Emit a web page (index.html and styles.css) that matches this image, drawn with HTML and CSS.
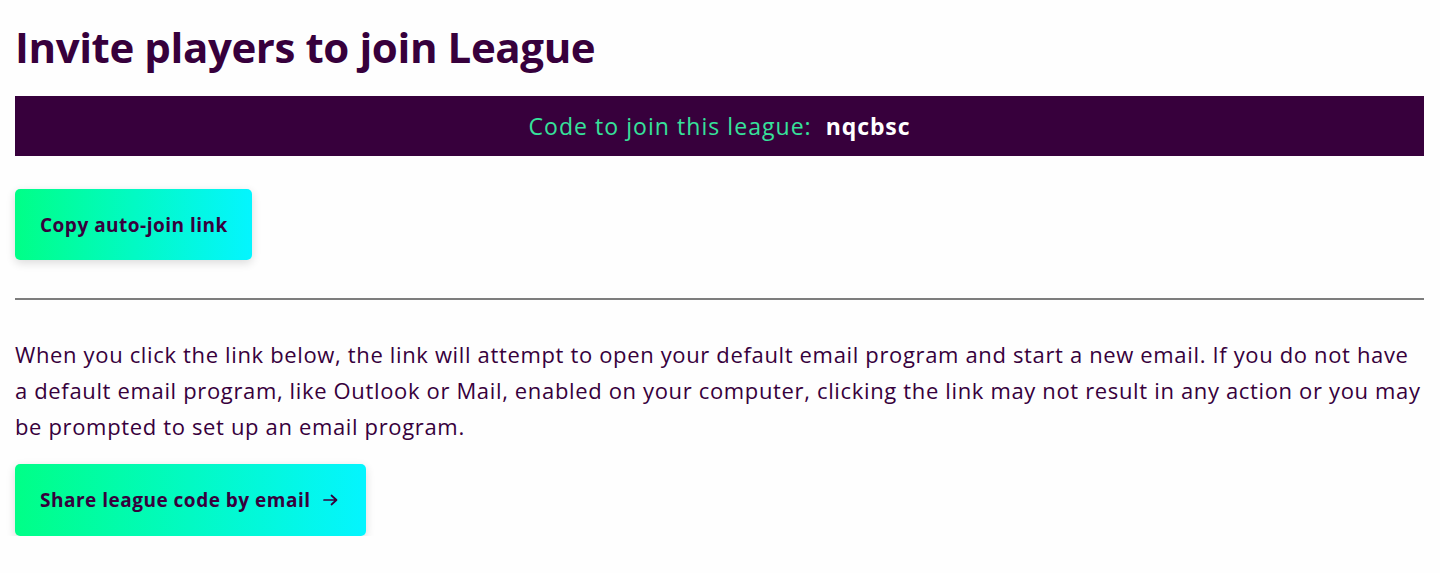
FILE: index.html
```html
<!DOCTYPE html>
<html lang="en">
<head>
<meta charset="utf-8">
<title>Invite players</title>
<link rel="stylesheet" href="styles.css">
</head>
<body>
<main class="page">
  <h1 class="title">Invite players to join League</h1>
  <div class="code-bar">
    <span class="code-label">Code to join this league:</span>
    <span class="code-value">nqcbsc</span>
  </div>
  <div class="copy-row">
    <button class="btn" type="button">Copy auto-join link</button>
  </div>
  <hr class="divider">
  <p class="info">When you click the link below, the link will attempt to open your default email program and start a new email. If you do not have a default email program, like Outlook or Mail, enabled on your computer, clicking the link may not result in any action or you may be prompted to set up an email program.</p>
  <a class="btn btn-share" href="#">Share league code by email
    <svg class="arrow" width="15" height="12" viewBox="0 0 15 12" aria-hidden="true"><path d="M1 6h12.5M8.5 1.5L13.5 6l-5 4.5" fill="none" stroke="#37003c" stroke-width="1.7" stroke-linecap="round" stroke-linejoin="round"/></svg>
  </a>
</main>
</body>
</html>
```

FILE: styles.css
```css
* { box-sizing: border-box; }
html, body { margin: 0; padding: 0; background: #fefefe; }
body { font-family: "Open Sans", "Noto Sans", sans-serif; color: #37003c; }
.page { padding: 20px 16px 0 15px; }
.title { margin: 0; font-size: 42px; font-weight: 700; line-height: 54px; letter-spacing: -0.4px; }
.code-bar {
  margin-top: 22px; height: 60px; background: #37003c;
  display: flex; align-items: center; justify-content: center; gap: 14px;
  font-size: 23px; letter-spacing: 1.05px;
}
.code-label { color: #36e29b; }
.code-value { color: #fff; font-weight: 700; letter-spacing: 0.9px; }
.copy-row { padding-top: 33px; }
.btn {
  display: inline-flex; align-items: center; gap: 12px;
  height: 71px; padding: 0 24px 0 25px;
  border: 0; border-radius: 5px;
  background: linear-gradient(to right, #00ff87, #04f5ff);
  box-shadow: 0 3px 10px rgba(0,0,0,0.14);
  font-family: inherit; font-size: 19px; font-weight: 700; color: #37003c;
  letter-spacing: 0.5px;
  text-decoration: none; cursor: pointer;
}
.divider { margin: 38px 0 0; border: 0; border-top: 2px solid #7d7d7d; }
.info { margin: 36px 0 0; font-size: 22px; line-height: 36px; letter-spacing: 0.65px; }
.btn-share { margin-top: 20px; height: 72px; padding-right: 28px; }
.arrow { display: block; }
```
